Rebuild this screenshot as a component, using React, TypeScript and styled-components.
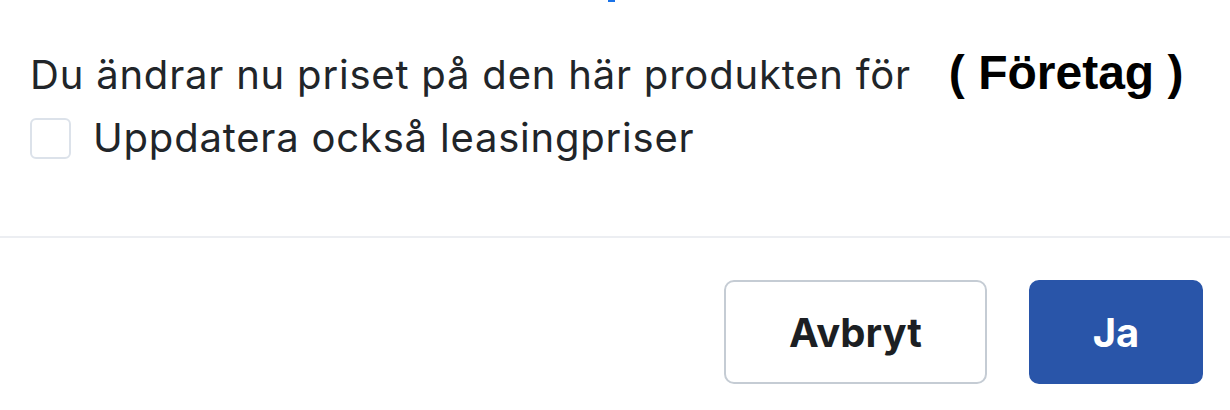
import styled, { createGlobalStyle } from "styled-components";

const GlobalStyle = createGlobalStyle`
  html, body {
    margin: 0;
    padding: 0;
    background: #ffffff;
  }
  body {
    font-family: Inter, "Noto Sans", sans-serif;
    color: #212529;
  }
`;

export default function App() {
  return (
    <>
      <GlobalStyle />
      <Dialog>
        <FocusMark />
        <Body>
          <Message>
            <span>Du ändrar nu priset på den här produkten för</span>
            <Segment>( Företag )</Segment>
          </Message>
          <CheckRow>
            <Box type="checkbox" />
            <span>Uppdatera också leasingpriser</span>
          </CheckRow>
        </Body>
        <Footer>
          <Button>Avbryt</Button>
          <Button primary>Ja</Button>
        </Footer>
      </Dialog>
    </>
  );
}

const Dialog = styled.div`
  width: 1230px;
  height: 410px;
  display: flex;
  flex-direction: column;
  position: relative;
  overflow: hidden;
`;

const FocusMark = styled.div`
  position: absolute;
  top: 0;
  left: 608px;
  width: 7px;
  height: 2px;
  background: #1a73e8;
`;

const Body = styled.div`
  height: 238px;
  box-sizing: border-box;
  padding: 47px 30px 0;
  border-bottom: 2px solid #eceef2;
  display: flex;
  flex-direction: column;
  gap: 12px;
`;

const Message = styled.div`
  display: flex;
  align-items: baseline;
  gap: 38px;
  font-size: 40px;
  letter-spacing: 0.8px;
  line-height: 52px;
  white-space: nowrap;
`;

const Segment = styled.b`
  font-family: "Liberation Sans", Arial, sans-serif;
  font-weight: 700;
  font-size: 48px;
  letter-spacing: 0;
  color: #000;
`;

const CheckRow = styled.label`
  display: flex;
  align-items: center;
  gap: 22px;
  font-size: 40px;
  letter-spacing: 0.8px;
  line-height: 50px;
`;

const Box = styled.input`
  appearance: none;
  margin: 0;
  width: 41px;
  height: 41px;
  box-sizing: border-box;
  border: 2px solid #dce2ea;
  border-radius: 6px;
  background: #fff;
`;

const Footer = styled.div`
  flex: 1;
  display: flex;
  justify-content: flex-end;
  align-items: flex-start;
  gap: 42px;
  padding: 42px 27px 0 0;
`;

const Button = styled.button<{ primary?: boolean }>`
  height: 104px;
  width: ${(p) => (p.primary ? "174px" : "263px")};
  box-sizing: border-box;
  border-radius: 10px;
  border: 2px solid ${(p) => (p.primary ? "#2955a9" : "#c5ccd4")};
  background: ${(p) => (p.primary ? "#2955a9" : "#ffffff")};
  color: ${(p) => (p.primary ? "#ffffff" : "#1c1f23")};
  font-family: Inter, "Noto Sans", sans-serif;
  font-weight: 700;
  font-size: 40px;
  cursor: pointer;
`;
